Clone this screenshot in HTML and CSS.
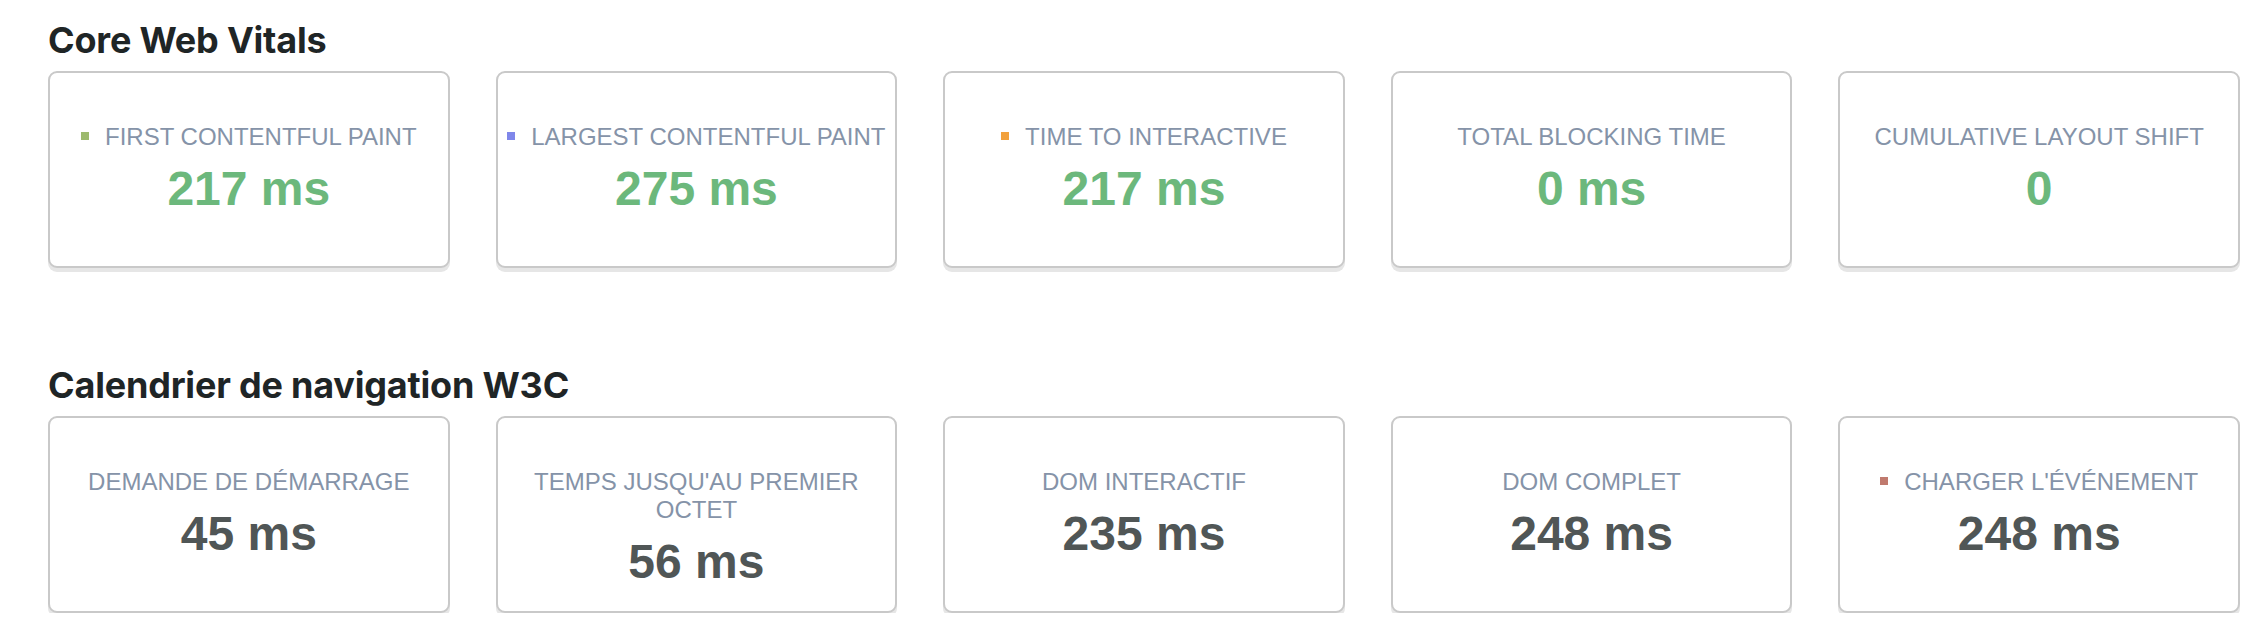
FILE: index.html
```html
<!DOCTYPE html>
<html lang="fr">
<head>
<meta charset="utf-8">
<title>Core Web Vitals</title>
<link rel="stylesheet" href="styles.css">
</head>
<body>
<main class="page">
  <section class="section">
    <h2 class="title">Core Web Vitals</h2>
    <div class="grid">
      <div class="card">
        <div class="label"><span class="dot dot-green"></span>FIRST CONTENTFUL PAINT</div>
        <div class="value good">217 ms</div>
      </div>
      <div class="card">
        <div class="label"><span class="dot dot-blue"></span>LARGEST CONTENTFUL PAINT</div>
        <div class="value good">275 ms</div>
      </div>
      <div class="card">
        <div class="label"><span class="dot dot-orange"></span>TIME TO INTERACTIVE</div>
        <div class="value good">217 ms</div>
      </div>
      <div class="card">
        <div class="label">TOTAL BLOCKING TIME</div>
        <div class="value good">0 ms</div>
      </div>
      <div class="card">
        <div class="label">CUMULATIVE LAYOUT SHIFT</div>
        <div class="value good">0</div>
      </div>
    </div>
  </section>
  <section class="section section-second">
    <h2 class="title">Calendrier de navigation W3C</h2>
    <div class="grid">
      <div class="card">
        <div class="label">DEMANDE DE DÉMARRAGE</div>
        <div class="value">45 ms</div>
      </div>
      <div class="card">
        <div class="label">TEMPS JUSQU'AU PREMIER OCTET</div>
        <div class="value">56 ms</div>
      </div>
      <div class="card">
        <div class="label">DOM INTERACTIF</div>
        <div class="value">235 ms</div>
      </div>
      <div class="card">
        <div class="label">DOM COMPLET</div>
        <div class="value">248 ms</div>
      </div>
      <div class="card">
        <div class="label"><span class="dot dot-brown"></span>CHARGER L'ÉVÉNEMENT</div>
        <div class="value">248 ms</div>
      </div>
    </div>
  </section>
</main>
</body>
</html>
```

FILE: styles.css
```css
html, body {
  margin: 0;
  padding: 0;
  background: #ffffff;
}

.page {
  padding: 18px 27px 0 48px;
  font-family: "Liberation Sans", Arial, sans-serif;
}

.section-second {
  margin-top: 95px;
}

.title {
  margin: 0 0 9px 0;
  font-family: Inter, "Liberation Sans", sans-serif;
  font-weight: 700;
  font-size: 36px;
  line-height: 44px;
  color: #1f2526;
  letter-spacing: -0.2px;
}

.grid {
  display: grid;
  grid-template-columns: repeat(5, 1fr);
  column-gap: 46px;
}

.card {
  box-sizing: border-box;
  height: 197px;
  border: 2px solid #c9c9c9;
  border-radius: 9px;
  box-shadow: 0 4px 0 #e6e6e6;
  padding: 50px 4px 0;
  text-align: center;
  background: #fff;
}

.label {
  font-size: 24px;
  line-height: 28px;
  color: #8593a8;
}

.label-dot,
.label:has(.dot) {
  white-space: nowrap;
}

.dot {
  display: inline-block;
  width: 8px;
  height: 8px;
  margin-right: 16px;
  vertical-align: 5px;
}

.dot-green { background: #9dba6e; }
.dot-blue { background: #7f87ea; }
.dot-orange { background: #f2a13d; }
.dot-brown { background: #c07a6e; }

.value {
  margin-top: 10px;
  font-size: 48px;
  line-height: 56px;
  font-weight: 700;
  color: #505656;
}

.value.good {
  color: #6cb87c;
}
```
